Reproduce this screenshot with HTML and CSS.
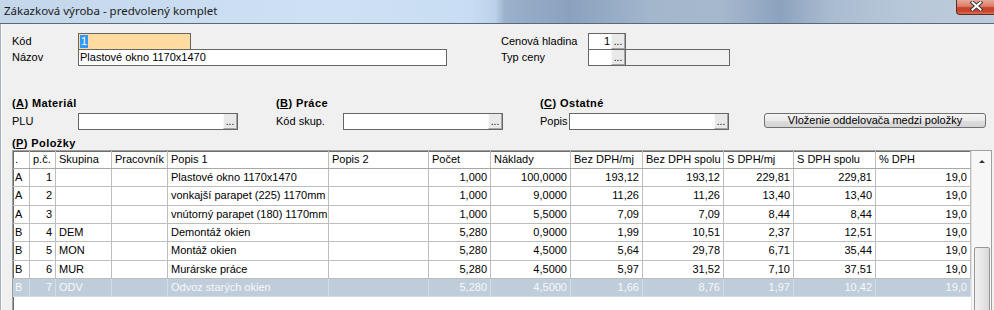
FILE: index.html
```html
<!DOCTYPE html>
<html lang="sk">
<head>
  <meta charset="UTF-8">
  <meta name="viewport" content="width=device-width, initial-scale=1.0">
  <title>Zákazková výroba - predvolený komplet</title>
  <link rel="stylesheet" href="styles.css">
</head>
<body>
  <div class="window">
    <div class="titlebar">
      <span class="title">Zákazková výroba - predvolený komplet</span>
      <span class="close">
        <svg width="13" height="10" viewBox="0 0 13 10">
          <path d="M2.5 1.5 L10.5 8.5 M10.5 1.5 L2.5 8.5" stroke="#3b3b3b" stroke-width="4" stroke-linecap="square" fill="none"/>
          <path d="M2.5 1.5 L10.5 8.5 M10.5 1.5 L2.5 8.5" stroke="#ffffff" stroke-width="2" stroke-linecap="square" fill="none"/>
        </svg>
      </span>
    </div>

    <div class="content">
      <div class="head">
        <div class="head-left">
          <div class="field">
            <label>Kód</label>
            <div class="input kod"><span class="sel">1</span></div>
          </div>
          <div class="field joined">
            <label>Názov</label>
            <div class="input nazov">Plastové okno 1170x1470</div>
          </div>
        </div>
        <div class="head-right">
          <div class="field">
            <label class="wide-label">Cenová hladina</label>
            <div class="input pick"><span class="val">1</span><span class="dots">...</span></div>
          </div>
          <div class="field joined">
            <label class="wide-label">Typ ceny</label>
            <div class="input pick"><span class="val"></span><span class="dots">...</span></div>
            <div class="input disabled"></div>
          </div>
        </div>
      </div>

      <div class="sections">
        <div class="section sec-a">
          <div class="section-title">(<u>A</u>) Materiál</div>
          <div class="field">
            <label>PLU</label>
            <div class="input lookup"><span class="val"></span><span class="dots">...</span></div>
          </div>
        </div>
        <div class="section sec-b">
          <div class="section-title">(<u>B</u>) Práce</div>
          <div class="field">
            <label class="label-b">Kód skup.</label>
            <div class="input lookup"><span class="val"></span><span class="dots">...</span></div>
          </div>
        </div>
        <div class="section sec-c">
          <div class="section-title">(<u>C</u>) Ostatné</div>
          <div class="field">
            <label class="label-c">Popis</label>
            <div class="input lookup"><span class="val"></span><span class="dots">...</span></div>
          </div>
        </div>
        <button type="button" class="btn">Vloženie oddelovača medzi položky</button>
      </div>

      <div class="section-title list-title">(<u>P</u>) Položky</div>

      <div class="grid">
        <div class="rows">
          <div class="row header">
            <div class="cell">.</div><div class="cell">p.č.</div><div class="cell">Skupina</div><div class="cell">Pracovník</div>
            <div class="cell">Popis 1</div><div class="cell">Popis 2</div><div class="cell">Počet</div><div class="cell">Náklady</div>
            <div class="cell">Bez DPH/mj</div><div class="cell">Bez DPH spolu</div><div class="cell">S DPH/mj</div><div class="cell">S DPH spolu</div><div class="cell">% DPH</div>
          </div>
          <div class="row">
            <div class="cell">A</div><div class="cell r">1</div><div class="cell"></div><div class="cell"></div>
            <div class="cell">Plastové okno 1170x1470</div><div class="cell"></div><div class="cell r">1,000</div><div class="cell r">100,0000</div>
            <div class="cell r">193,12</div><div class="cell r">193,12</div><div class="cell r">229,81</div><div class="cell r">229,81</div><div class="cell r">19,0</div>
          </div>
          <div class="row">
            <div class="cell">A</div><div class="cell r">2</div><div class="cell"></div><div class="cell"></div>
            <div class="cell">vonkajší parapet (225) 1170mm</div><div class="cell"></div><div class="cell r">1,000</div><div class="cell r">9,0000</div>
            <div class="cell r">11,26</div><div class="cell r">11,26</div><div class="cell r">13,40</div><div class="cell r">13,40</div><div class="cell r">19,0</div>
          </div>
          <div class="row">
            <div class="cell">A</div><div class="cell r">3</div><div class="cell"></div><div class="cell"></div>
            <div class="cell">vnútorný parapet (180) 1170mm</div><div class="cell"></div><div class="cell r">1,000</div><div class="cell r">5,5000</div>
            <div class="cell r">7,09</div><div class="cell r">7,09</div><div class="cell r">8,44</div><div class="cell r">8,44</div><div class="cell r">19,0</div>
          </div>
          <div class="row">
            <div class="cell">B</div><div class="cell r">4</div><div class="cell">DEM</div><div class="cell"></div>
            <div class="cell">Demontáž okien</div><div class="cell"></div><div class="cell r">5,280</div><div class="cell r">0,9000</div>
            <div class="cell r">1,99</div><div class="cell r">10,51</div><div class="cell r">2,37</div><div class="cell r">12,51</div><div class="cell r">19,0</div>
          </div>
          <div class="row">
            <div class="cell">B</div><div class="cell r">5</div><div class="cell">MON</div><div class="cell"></div>
            <div class="cell">Montáž okien</div><div class="cell"></div><div class="cell r">5,280</div><div class="cell r">4,5000</div>
            <div class="cell r">5,64</div><div class="cell r">29,78</div><div class="cell r">6,71</div><div class="cell r">35,44</div><div class="cell r">19,0</div>
          </div>
          <div class="row">
            <div class="cell">B</div><div class="cell r">6</div><div class="cell">MUR</div><div class="cell"></div>
            <div class="cell">Murárske práce</div><div class="cell"></div><div class="cell r">5,280</div><div class="cell r">4,5000</div>
            <div class="cell r">5,97</div><div class="cell r">31,52</div><div class="cell r">7,10</div><div class="cell r">37,51</div><div class="cell r">19,0</div>
          </div>
          <div class="row selected">
            <div class="cell">B</div><div class="cell r">7</div><div class="cell">ODV</div><div class="cell"></div>
            <div class="cell">Odvoz starých okien</div><div class="cell"></div><div class="cell r">5,280</div><div class="cell r">4,5000</div>
            <div class="cell r">1,66</div><div class="cell r">8,76</div><div class="cell r">1,97</div><div class="cell r">10,42</div><div class="cell r">19,0</div>
          </div>
        </div>
        <div class="scrollbar">
          <span class="arrow"></span>
          <span class="thumb"></span>
        </div>
      </div>
    </div>
  </div>
</body>
</html>
```

FILE: styles.css
```css
body { margin: 0; padding: 0; height: 310px; overflow: hidden; background: #f0f0f0; font-family: "Liberation Sans", Arial, sans-serif; font-size: 11px; color: #000; }
.window { width: 994px; height: 310px; overflow: hidden; }

/* title bar */
.titlebar { height: 23px; display: flex; align-items: flex-start; border-bottom: 1px solid #5a6a7c;
  background: linear-gradient(90deg, #c4d6ea 0px, #cfe1f4 330px, #c8ddf3 470px, #bcd2ea 495px, #9ab1cb 505px, #8aa2be 570px, #a2b6cc 650px, #a6b8cd 720px, #8ca3be 780px, #a9bbcf 830px, #b6c7d9 900px, #bdccdc 994px); }
.title { font-family: "Noto Sans", "Liberation Sans", sans-serif; font-size: 11.5px; line-height: 22px; padding-left: 4px; color: #1a1a1a; }
.close { margin-left: auto; width: 38px; height: 15px; box-sizing: border-box; border: 1px solid #5e2a22; border-top: none; border-right: none; border-radius: 0 0 0 4px;
  background: linear-gradient(180deg, #e7a797 0%, #dc7d68 45%, #c7432b 55%, #c8452c 80%, #d9735a 100%);
  display: flex; align-items: center; justify-content: center; }
.close svg { display: block; margin-top: -2px; margin-left: 1px; }

/* form */
.content { padding-left: 11px; border-left: 1px solid #9fb0c3; box-shadow: inset 1px 0 0 #ffffff; height: 286px; box-sizing: border-box; }
.head { display: flex; padding-top: 9px; }
.head-left { width: 489px; }
.field { display: flex; align-items: center; height: 17px; }
.field.joined { margin-top: -1px; }
.field label { width: 66px; flex: none; line-height: 17px; }
.field label.wide-label { width: 87px; }
.field label.label-b { width: 67px; }
.field label.label-c { width: 29px; }

.input { height: 17px; box-sizing: border-box; border: 1px solid #666666; background: #fff; padding: 0 1px; line-height: 15px; white-space: nowrap; display: flex; }
.kod { width: 113px; background: #fedb9e; }
.sel { display: inline-block; background: #3399ff; color: #fff; height: 13px; line-height: 13px; margin-top: 1px; padding: 0 1px; }
.nazov { width: 369px; }
.pick { width: 38px; padding: 0; }
.lookup { width: 160px; padding: 0; }
.val { flex: 1; text-align: right; padding-right: 1px; }
.dots { width: 14px; flex: none; height: 15px; box-sizing: border-box; background: #e9e9e9; border-left: 1px solid #f8f8f8; border-right: 1px solid #a6a6a6; border-bottom: 1px solid #a6a6a6;
  font-size: 10px; line-height: 15px; text-align: center; letter-spacing: 0; overflow: visible; }
.disabled { width: 105px; margin-left: -1px; background: #f0f0f0; }

.sections { display: flex; align-items: flex-end; margin-top: 30px; }
.section { flex: none; }
.sec-a, .sec-b { width: 264px; }
.sec-c { width: 224px; }
.section-title { font-weight: bold; height: 14px; line-height: 14px; margin-bottom: 3px; letter-spacing: 0.4px; }
.btn { width: 222px; height: 15px; margin: 0 0 2px 0; padding: 0; border: 1px solid #707070; border-radius: 3px; font-family: "Liberation Sans", Arial, sans-serif; font-size: 11px; line-height: 13px; color: #000;
  background: linear-gradient(180deg, #f4f4f4 0%, #ebebeb 50%, #dddddd 51%, #d4d4d4 100%); }

.list-title { margin-top: 7px; height: 13px; line-height: 13px; margin-bottom: 0; }

/* grid */
.grid { display: flex; width: 980px; height: 170px; box-sizing: border-box; border: 1px solid #a0a0a0; box-shadow: inset 1px 1px 0 #6d6d6d; background: #fff; }
.rows { width: 958px; }
.row { display: grid; grid-template-columns: 17px 26px 56px 56px 161px 100px 62px 80px 72px 81px 70px 82px 95px; height: 18.34px; box-sizing: border-box; border-bottom: 1px solid #bdbdbd; }
.row.header { height: 18px; border-bottom-color: #a8a8a8; }
.cell { border-right: 1px solid #bdbdbd; padding: 0 3px; line-height: 17px; white-space: nowrap; overflow: hidden; }
.row .cell:first-child { padding-left: 2px; }
.cell.r { text-align: right; }
.row.selected { background: #bfcddb; color: #f6f8fa; border-bottom-color: #d3dbe3; }
.row.selected .cell { border-right-color: #d3dbe3; }

.scrollbar { flex: 1; background: #f7f7f7; border-left: 1px solid #e2e2e2; display: flex; flex-direction: column; align-items: center; }
.arrow { margin-top: 9px; width: 0; height: 0; border-left: 3px solid transparent; border-right: 3px solid transparent; border-bottom: 3px solid #333; }
.thumb { margin-top: 84px; width: 16px; height: 80px; box-sizing: border-box; border: 1px solid #979797; border-radius: 2px; background: linear-gradient(90deg, #f2f2f2, #e4e4e4 60%, #d8d8d8); }
```
